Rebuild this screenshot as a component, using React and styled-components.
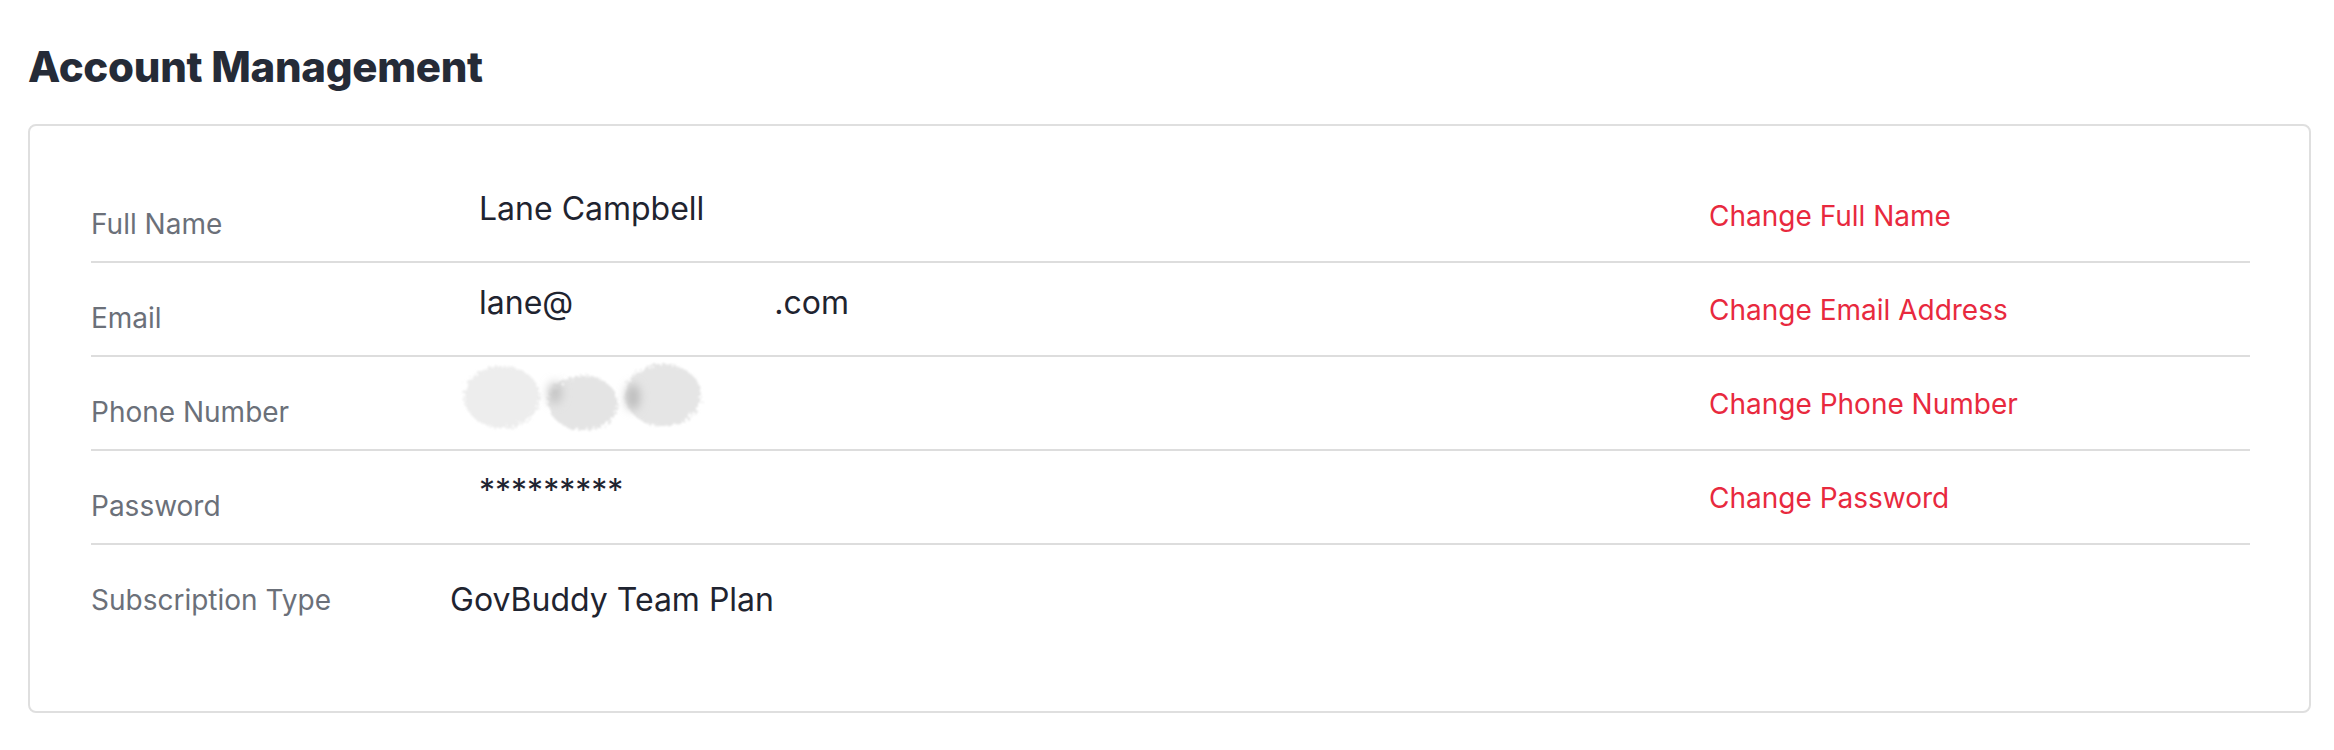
import styled, { createGlobalStyle } from "styled-components";

const GlobalStyle = createGlobalStyle`
  body {
    margin: 0;
    background: #ffffff;
    font-family: Inter, "Noto Sans", sans-serif;
  }
`;

//rows of the account table
const rows = [
  { label: "Full Name", value: "Lane Campbell", action: "Change Full Name" },
  { label: "Email", value: "email", action: "Change Email Address" },
  { label: "Phone Number", value: "phone", action: "Change Phone Number" },
  { label: "Password", value: "*********", action: "Change Password" },
  { label: "Subscription Type", value: "GovBuddy Team Plan", plain: true },
];

//blurred phone number
const PhoneBlur = () => (
  <svg width="260" height="85" viewBox="0 0 260 85">
    <defs>
      <filter id="soft" x="-30%" y="-30%" width="160%" height="160%">
        <feTurbulence type="fractalNoise" baseFrequency="0.3" numOctaves="3" result="noise" />
        <feDisplacementMap in="SourceGraphic" in2="noise" scale="10" result="rough" />
        <feGaussianBlur in="rough" stdDeviation="0.8" />
      </filter>
      <filter id="shade" x="-80%" y="-80%" width="260%" height="260%">
        <feGaussianBlur stdDeviation="5" />
      </filter>
    </defs>
    <g filter="url(#soft)">
      <ellipse cx="47" cy="40" rx="38" ry="31" fill="#ededed" />
      <ellipse cx="128" cy="46" rx="35" ry="27" fill="#e4e4e4" />
      <ellipse cx="208" cy="38" rx="38" ry="31" fill="#e5e5e5" />
    </g>
    <g filter="url(#shade)">
      <ellipse cx="100" cy="36" rx="7" ry="11" fill="#c4c4c4" />
      <ellipse cx="178" cy="40" rx="7" ry="13" fill="#bcbcbc" />
    </g>
  </svg>
);

const renderValue = (row) => {
  if (row.value === "email") {
    return (
      <Value>
        lane@<Redacted />.com
      </Value>
    );
  }
  if (row.value === "phone") {
    return (
      <BlurWrap>
        <PhoneBlur />
      </BlurWrap>
    );
  }
  return <Value $plain={row.plain}>{row.value}</Value>;
};

const App = () => {
  return (
    <Page>
      <GlobalStyle />
      <Title>Account Management</Title>
      <Card>
        {rows.map((row) => (
          <Row key={row.label} $last={row.plain}>
            <Label>{row.label}</Label>
            <div>{renderValue(row)}</div>
            <div>{row.action && <Action href="#">{row.action}</Action>}</div>
          </Row>
        ))}
      </Card>
    </Page>
  );
};

//styled components
const Page = styled.div`
  padding: 0 23px 38px 28px;
`;
const Title = styled.h1`
  margin: 42px 0 32px;
  font-family: Inter, "Noto Sans", sans-serif;
  font-size: 42px;
  line-height: 50px;
  font-weight: 800;
  letter-spacing: -0.3px;
  color: #252b37;
`;
const Card = styled.div`
  border: 2px solid #dfdfdf;
  border-radius: 8px;
  padding: 43px 59px 74px 61px;
  background: #ffffff;
`;
const Row = styled.div`
  display: grid;
  grid-template-columns: 359px 1259px 1fr;
  align-items: start;
  height: 92px;
  border-bottom: ${(p) => (p.$last ? "none" : "2px solid #dddddd")};
`;
const Label = styled.div`
  padding-top: 38px;
  font-size: 28px;
  line-height: 34px;
  color: #6b7079;
`;
const Value = styled.div`
  padding-top: ${(p) => (p.$plain ? "35px" : "20px")};
  padding-left: ${(p) => (p.$plain ? "0" : "29px")};
  font-size: 32px;
  line-height: 39px;
  color: #1f2430;
  white-space: nowrap;
`;
const Redacted = styled.span`
  display: inline-block;
  width: 201px;
`;
const BlurWrap = styled.div`
  padding-left: 5px;
  svg {
    display: block;
  }
`;
const Action = styled.a`
  display: inline-block;
  margin-top: 30px;
  font-size: 28px;
  line-height: 34px;
  color: #e8293e;
  text-decoration: none;
`;

export default App;
